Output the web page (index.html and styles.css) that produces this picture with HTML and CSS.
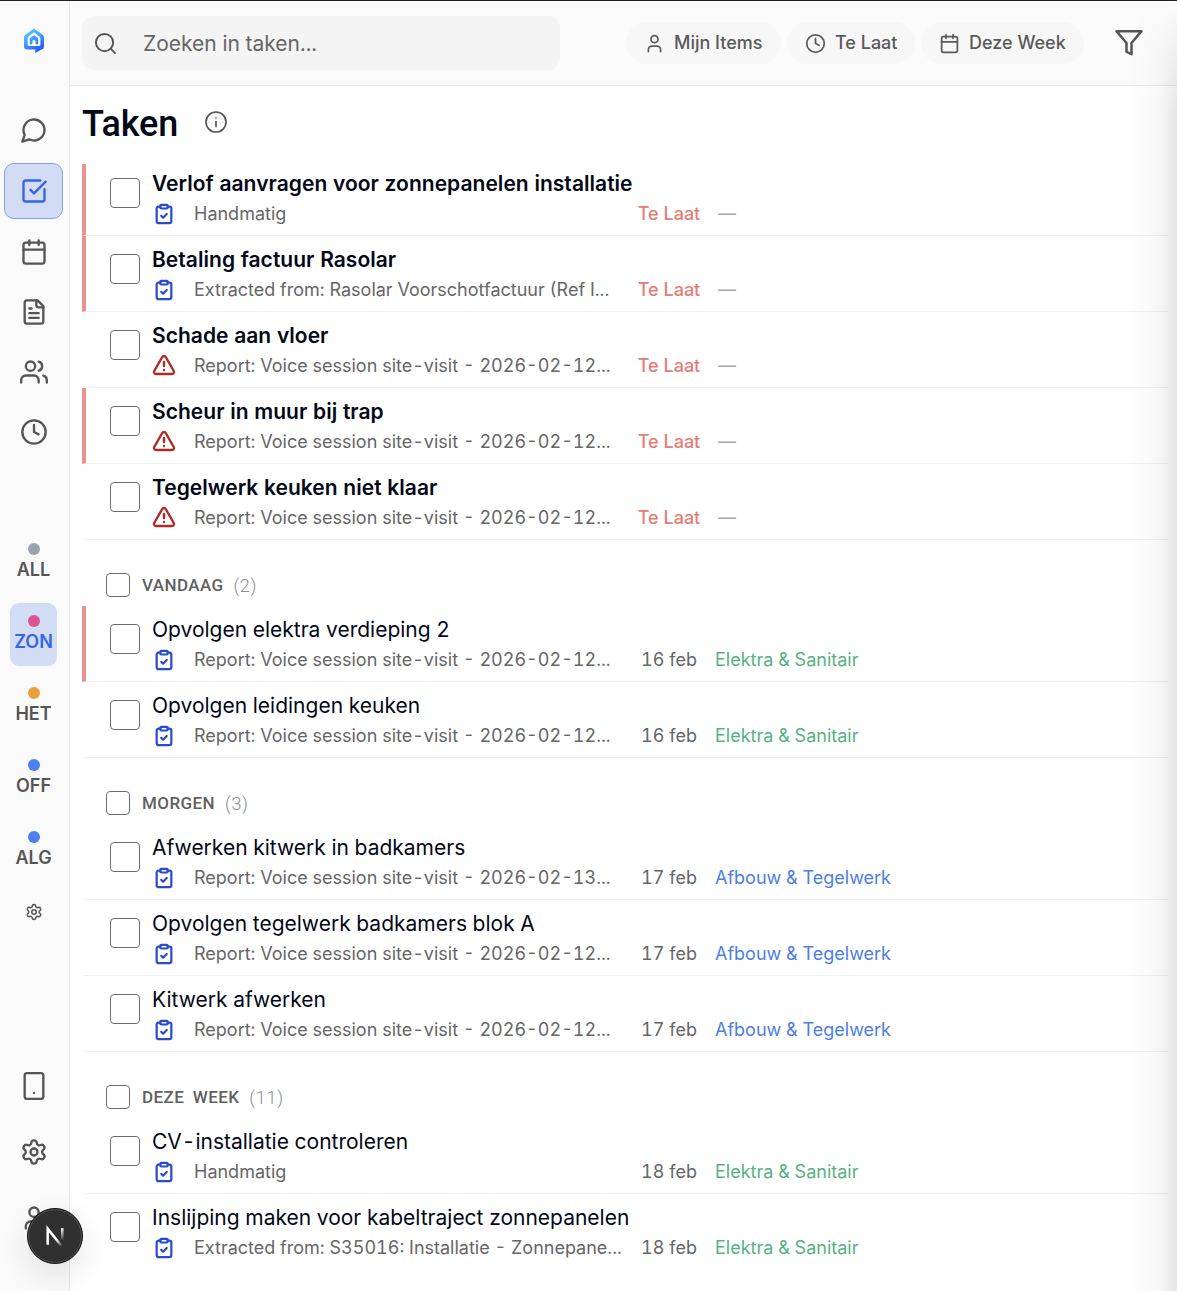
FILE: index.html
```html
<!DOCTYPE html>
<html lang="nl">
<head>
<meta charset="utf-8">
<title>Taken</title>
<link rel="stylesheet" href="styles.css">
</head>
<body>
<svg class="sprite" aria-hidden="true">
  <symbol id="clipboard" viewBox="0 0 24 24"><rect x="8" y="2" width="8" height="4" rx="1"/><path d="M16 4h2a2 2 0 0 1 2 2v14a2 2 0 0 1-2 2H6a2 2 0 0 1-2-2V6a2 2 0 0 1 2-2h2"/><path d="m9 14 2 2 4-4"/></symbol>
  <symbol id="warning" viewBox="0 0 24 24"><path d="m21.730 18-8-14a2 2 0 0 0-3.480 0l-8 14A2 2 0 0 0 4 21h16a2 2 0 0 0 1.730-3"/><path d="M12 9v4"/><path d="M12 17h.01"/></symbol>
  <symbol id="calendar" viewBox="0 0 24 24"><path d="M8 2v4M16 2v4M3 10h18"/><rect x="3" y="4" width="18" height="18" rx="2"/></symbol>
  <symbol id="clock" viewBox="0 0 24 24"><circle cx="12" cy="12" r="10"/><path d="M12 6v6l4 2"/></symbol>
  <symbol id="user" viewBox="0 0 24 24"><path d="M19 21v-2a4 4 0 0 0-4-4H9a4 4 0 0 0-4 4v2"/><circle cx="12" cy="7" r="4"/></symbol>
  <symbol id="gear" viewBox="0 0 24 24"><path d="M9.671 4.136a2.340 2.340 0 0 1 4.659 0 2.340 2.340 0 0 0 3.319 1.915 2.340 2.340 0 0 1 2.330 4.033 2.340 2.340 0 0 0 0 3.831 2.340 2.340 0 0 1-2.330 4.033 2.340 2.340 0 0 0-3.319 1.915 2.340 2.340 0 0 1-4.659 0 2.340 2.340 0 0 0-3.320-1.915 2.340 2.340 0 0 1-2.330-4.033 2.340 2.340 0 0 0 0-3.831A2.340 2.340 0 0 1 6.350 6.051a2.340 2.340 0 0 0 3.319-1.915"/><circle cx="12" cy="12" r="3"/></symbol>
</svg>
<div class="app">
  <nav class="sidebar">
    <svg class="logo" viewBox="0 0 22 26"><defs><linearGradient id="brand" gradientUnits="userSpaceOnUse" x1="4" y1="2" x2="18" y2="25"><stop offset="0" stop-color="#5ccbff"/><stop offset=".5" stop-color="#3494fb"/><stop offset="1" stop-color="#2546ff"/></linearGradient></defs><path fill="url(#brand)" fill-rule="evenodd" d="M11 .5 19.600 6.700Q21 7.700 21 9.500V18.500Q21 21 18.500 21.500L17.500 22 12.300 25V21.500H4Q1 21.500 1 18.500V9.500Q1 7.700 2.400 6.700ZM11 4.300 5.300 8.400Q4.600 9 4.600 10V16.500Q4.600 18 6.100 18H15.900Q17.400 18 17.400 16.500V10Q17.400 9 16.700 8.400Z"/><path fill="url(#brand)" d="M11 7.200 14.300 9.600Q15.200 10.300 15.200 11.400V16.200H12.600V13.500Q12.600 12 11 12T9.400 13.500V16.200H6.800V11.400Q6.800 10.300 7.700 9.600Z"/></svg>
    <div class="nav">
      <a class="nav-item"><svg class="icon" viewBox="0 0 24 24"><path d="M7.900 20A9 9 0 1 0 4 16.100L2 22Z"/></svg></a>
      <a class="nav-item active"><svg class="icon" viewBox="0 0 24 24"><path d="M21 10.500V19a2 2 0 0 1-2 2H5a2 2 0 0 1-2-2V5a2 2 0 0 1 2-2h12.500"/><path d="m9 11 3 3L22 4"/></svg></a>
      <a class="nav-item"><svg class="icon"><use href="#calendar"/></svg></a>
      <a class="nav-item"><svg class="icon" viewBox="0 0 24 24"><path d="M15 2H6a2 2 0 0 0-2 2v16a2 2 0 0 0 2 2h12a2 2 0 0 0 2-2V7Z"/><path d="M14 2v4a2 2 0 0 0 2 2h4M10 9H8M16 13H8M16 17H8"/></svg></a>
      <a class="nav-item"><svg class="icon" viewBox="0 0 24 24"><path d="M16 21v-2a4 4 0 0 0-4-4H5a4 4 0 0 0-4 4v2M23 21v-2a4 4 0 0 0-3-3.870M16 3.130a4 4 0 0 1 0 7.750"/><circle cx="9" cy="7" r="4"/></svg></a>
      <a class="nav-item"><svg class="icon"><use href="#clock"/></svg></a>
    </div>
    <div class="projects">
      <a class="project"><span class="dot gray"></span>ALL</a>
      <a class="project selected"><span class="dot pink"></span>ZON</a>
      <a class="project"><span class="dot orange"></span>HET</a>
      <a class="project"><span class="dot blue"></span>OFF</a>
      <a class="project"><span class="dot blue"></span>ALG</a>
    </div>
    <svg class="icon small-gear"><use href="#gear"/></svg>
    <div class="bottom-nav">
      <svg class="icon" viewBox="0 0 24 24"><rect x="4" y="1" width="16" height="22" rx="2"/><path d="M12 18h.01"/></svg>
      <svg class="icon"><use href="#gear"/></svg>
      <svg class="icon"><use href="#user"/></svg>
    </div>
  </nav>
  <main class="main">
    <header class="topbar">
      <div class="search"><svg class="icon" viewBox="0 0 24 24"><circle cx="11" cy="11" r="9"/><path d="m22 22-4.600-4.600"/></svg><span>Zoeken in taken...</span></div>
      <div class="filters">
        <button class="chip mine"><svg class="icon"><use href="#user"/></svg><span>Mijn Items</span></button>
        <button class="chip late"><svg class="icon"><use href="#clock"/></svg><span>Te Laat</span></button>
        <button class="chip week"><svg class="icon"><use href="#calendar"/></svg><span>Deze Week</span></button>
      </div>
      <svg class="icon funnel" viewBox="0 0 24 24"><path d="M22 2.500H2l8 9.460V19l4 2v-9.040Z"/></svg>
    </header>
    <div class="heading"><h1>Taken</h1><svg class="icon" viewBox="0 0 24 24"><circle cx="12" cy="12" r="10"/><path d="M12 16.500v-5M12 8h.01"/></svg></div>
    <section class="list overdue">
      <article class="task flagged"><span class="check"></span><h3>Verlof aanvragen voor zonnepanelen installatie</h3><div class="meta"><svg class="icon kind"><use href="#clipboard"/></svg><span class="source">Handmatig</span><span class="due late-text">Te Laat</span><span class="none">—</span></div></article>
      <article class="task flagged"><span class="check"></span><h3>Betaling factuur Rasolar</h3><div class="meta"><svg class="icon kind"><use href="#clipboard"/></svg><span class="source">Extracted from: Rasolar Voorschotfactuur (Ref I...</span><span class="due late-text">Te Laat</span><span class="none">—</span></div></article>
      <article class="task"><span class="check"></span><h3>Schade aan vloer</h3><div class="meta"><svg class="icon kind warn"><use href="#warning"/></svg><span class="source">Report: Voice session site-visit - 2026-02-12...</span><span class="due late-text">Te Laat</span><span class="none">—</span></div></article>
      <article class="task flagged"><span class="check"></span><h3>Scheur in muur bij trap</h3><div class="meta"><svg class="icon kind warn"><use href="#warning"/></svg><span class="source">Report: Voice session site-visit - 2026-02-12...</span><span class="due late-text">Te Laat</span><span class="none">—</span></div></article>
      <article class="task"><span class="check"></span><h3>Tegelwerk keuken niet klaar</h3><div class="meta"><svg class="icon kind warn"><use href="#warning"/></svg><span class="source">Report: Voice session site-visit - 2026-02-12...</span><span class="due late-text">Te Laat</span><span class="none">—</span></div></article>
    </section>
    <section class="list">
      <h2><span class="check"></span>VANDAAG<small>(2)</small></h2>
      <article class="task flagged"><span class="check"></span><h3>Opvolgen elektra verdieping 2</h3><div class="meta"><svg class="icon kind"><use href="#clipboard"/></svg><span class="source">Report: Voice session site-visit - 2026-02-12...</span><span class="due">16 feb</span><span class="electric">Elektra &amp; Sanitair</span></div></article>
      <article class="task"><span class="check"></span><h3>Opvolgen leidingen keuken</h3><div class="meta"><svg class="icon kind"><use href="#clipboard"/></svg><span class="source">Report: Voice session site-visit - 2026-02-12...</span><span class="due">16 feb</span><span class="electric">Elektra &amp; Sanitair</span></div></article>
    </section>
    <section class="list">
      <h2><span class="check"></span>MORGEN<small>(3)</small></h2>
      <article class="task"><span class="check"></span><h3>Afwerken kitwerk in badkamers</h3><div class="meta"><svg class="icon kind"><use href="#clipboard"/></svg><span class="source">Report: Voice session site-visit - 2026-02-13...</span><span class="due">17 feb</span><span class="finish">Afbouw &amp; Tegelwerk</span></div></article>
      <article class="task"><span class="check"></span><h3>Opvolgen tegelwerk badkamers blok A</h3><div class="meta"><svg class="icon kind"><use href="#clipboard"/></svg><span class="source">Report: Voice session site-visit - 2026-02-12...</span><span class="due">17 feb</span><span class="finish">Afbouw &amp; Tegelwerk</span></div></article>
      <article class="task"><span class="check"></span><h3>Kitwerk afwerken</h3><div class="meta"><svg class="icon kind"><use href="#clipboard"/></svg><span class="source">Report: Voice session site-visit - 2026-02-12...</span><span class="due">17 feb</span><span class="finish">Afbouw &amp; Tegelwerk</span></div></article>
    </section>
    <section class="list last">
      <h2><span class="check"></span>DEZE WEEK<small>(11)</small></h2>
      <article class="task"><span class="check"></span><h3>CV-installatie controleren</h3><div class="meta"><svg class="icon kind"><use href="#clipboard"/></svg><span class="source">Handmatig</span><span class="due">18 feb</span><span class="electric">Elektra &amp; Sanitair</span></div></article>
      <article class="task"><span class="check"></span><h3>Inslijping maken voor kabeltraject zonnepanelen</h3><div class="meta"><svg class="icon kind"><use href="#clipboard"/></svg><span class="source">Extracted from: S35016: Installatie - Zonnepane...</span><span class="due">18 feb</span><span class="electric">Elektra &amp; Sanitair</span></div></article>
    </section>
  </main>
</div>
<div class="drawer-shadow"></div>
<div class="dev-badge"><svg viewBox="0 0 24 24"><defs><linearGradient id="fadeDiag" gradientUnits="userSpaceOnUse" x1="14" y1="14" x2="19" y2="21"><stop stop-color="#fff"/><stop offset="1" stop-color="#fff" stop-opacity="0"/></linearGradient><linearGradient id="fadeStem" gradientUnits="userSpaceOnUse" x1="0" y1="4" x2="0" y2="16"><stop stop-color="#fff"/><stop offset="1" stop-color="#fff" stop-opacity="0"/></linearGradient></defs><path d="M4.500 20V4.500L18.500 22" stroke="url(#fadeDiag)"/><path d="M18.500 4v12" stroke="url(#fadeStem)"/></svg></div>
</body>
</html>
```
FILE: styles.css
```css
* { box-sizing: border-box; }
body {
  margin: 0;
  height: 1291px;
  overflow: hidden;
  background: #fff;
  color: #020817;
  font-family: Inter, "Liberation Sans", sans-serif;
  font-variant-numeric: tabular-nums;
}
h1, h2, h3 { margin: 0; }
.sprite { position: absolute; width: 0; height: 0; }
.icon {
  width: 28px;
  height: 28px;
  flex: none;
  fill: none;
  stroke: currentColor;
  stroke-width: 2;
  stroke-linecap: round;
  stroke-linejoin: round;
}
.app { display: flex; height: 1291px; border-top: 1px solid #232025; }

.sidebar {
  width: 70px;
  flex: none;
  display: flex;
  flex-direction: column;
  align-items: center;
  padding-right: 2px;
  background: #fafafa;
  border-right: 1px solid #e5e5e5;
  color: #555;
}
.logo { width: 22px; height: 26px; margin-top: 27px; flex: none; }
.nav { display: flex; flex-direction: column; gap: 4px; margin-top: 48px; }
.nav-item {
  width: 59px;
  height: 56px;
  display: flex;
  align-items: center;
  justify-content: center;
  border: 1px solid transparent;
  border-radius: 10px;
}
.nav-item.active { margin: 1px 0; background: #d3dcf5; border-color: #86a1ee; color: #3763e6; }
.projects { display: flex; flex-direction: column; gap: 9px; margin-top: 71px; }
.project {
  width: 47px;
  height: 63px;
  padding-top: 12px;
  display: flex;
  flex-direction: column;
  align-items: center;
  gap: 3px;
  border-radius: 9px;
  font-size: 18px;
  font-weight: 600;
  line-height: 24px;
}
.project.selected { background: #d3dcf5; color: #3763e6; }
.dot { width: 12px; height: 12px; border-radius: 50%; flex: none; }
.gray { background: #9ca3af; }
.pink { background: #dc5396; }
.orange { background: #e7a13a; }
.blue { background: #4c80ee; }
.small-gear { width: 18px; height: 18px; margin-top: 21px; }
.bottom-nav { display: flex; flex-direction: column; gap: 38px; height: 160px; margin-top: 151px; }

.main { flex: 1; min-width: 0; }
.topbar {
  height: 85px;
  display: flex;
  align-items: center;
  padding: 0 33px 0 12px;
  background: #fbfbfb;
  border-bottom: 1px solid #ebebeb;
  color: #555;
}
.search {
  width: 479px;
  height: 54px;
  display: flex;
  align-items: center;
  gap: 26px;
  padding-left: 12px;
  border-radius: 12px;
  background: #f4f4f4;
  color: #666;
  font-size: 21px;
}
.search .icon { width: 23px; height: 23px; color: #555; }
.filters { display: flex; gap: 6px; margin-left: 66px; }
.chip {
  height: 42px;
  display: flex;
  align-items: center;
  gap: 9px;
  padding: 0 0 0 18px;
  border: 0;
  border-radius: 21px;
  background: #f7f7f7;
  color: #5a5a5a;
  font: 500 18px Inter, "Liberation Sans", sans-serif;
}
.chip span { padding-bottom: 2px; }
.chip .icon { width: 21px; height: 21px; }
.mine { width: 155px; }
.late { width: 128px; }
.week { width: 163px; }
.funnel { width: 30px; height: 30px; margin-left: 30px; }

.heading { height: 78px; display: flex; align-items: center; padding: 0 0 2px 12px; gap: 28px; }
h1 { font: 500 36px Roboto, sans-serif; width: 94px; letter-spacing: -.1px; white-space: nowrap; }
.heading .icon { width: 24px; height: 24px; color: #555; stroke-width: 1.7; margin-top: -4px; }

.list { margin: 0 9px 0 12px; }
h2 {
  height: 66px;
  display: flex;
  align-items: center;
  padding: 24px 0 0 24px;
  color: #5f5f5f;
  font: 500 17px Roboto, sans-serif;
  letter-spacing: .4px;
  word-spacing: 4px;
}
h2 .check { width: 24px; height: 24px; margin-right: 12px; }
h2 small { margin-left: 10px; color: #909090; font: 300 18px Roboto, sans-serif; letter-spacing: .7px; }
.check { flex: none; border: 1.500px solid #6c6c6c; border-radius: 4px; background: #fff; }
.task {
  height: 76px;
  display: grid;
  grid-template-columns: 30px 1fr;
  grid-template-rows: 30px 30px;
  column-gap: 12px;
  padding: 8px 0 0 24px;
  border-left: 4px solid transparent;
  border-bottom: 1px solid #f0f0f0;
}
.task.flagged { border-left-color: #e99390; }
.overdue .task:first-child { height: 72px; padding-top: 4px; }
.last .task:last-child { border-bottom: 0; }
.task .check { grid-row: 1 / 3; width: 30px; height: 30px; margin-top: 10px; }
h3 { font-size: 21px; font-weight: 400; line-height: 31px; white-space: nowrap; }
.overdue h3 { font-weight: 600; letter-spacing: .03px; }
.meta { display: flex; align-items: center; height: 30px; color: #666; font-size: 18px; white-space: nowrap; }
.kind { width: 22px; height: 22px; margin: 2px 19px 0 1px; color: #294bd0; stroke-width: 2.400; }
.kind.warn { width: 24px; height: 24px; margin: 0 18px 0 0; color: #b02a24; }
.source { width: 436px; }
.due { width: 78px; text-align: center; }
.late-text { color: #e77b76; font-weight: 500; }
.none { margin-left: 10px; color: #aaa; }
.electric { margin-left: 7px; color: #57b27f; }
.finish { margin-left: 7px; color: #4c7ee6; }

.drawer-shadow {
  position: absolute;
  right: 0;
  top: 0;
  width: 48px;
  height: 1291px;
  background: linear-gradient(to right, transparent, rgba(0, 0, 0, .01) 30%, rgba(0, 0, 0, .035) 65%, rgba(0, 0, 0, .1));
  -webkit-mask-image: linear-gradient(transparent, #000 110px);
  mask-image: linear-gradient(transparent, #000 110px);
}
.dev-badge {
  position: absolute;
  left: 27px;
  top: 1208px;
  width: 56px;
  height: 56px;
  display: flex;
  align-items: center;
  justify-content: center;
  border-radius: 50%;
  background: #303030;
  border: 1px solid #111;
  box-shadow: inset 0 0 0 1px #555, 0 12px 32px rgba(0, 0, 0, .1);
}
.dev-badge svg { width: 25px; height: 25px; fill: none; stroke-width: 2.400; }
```
